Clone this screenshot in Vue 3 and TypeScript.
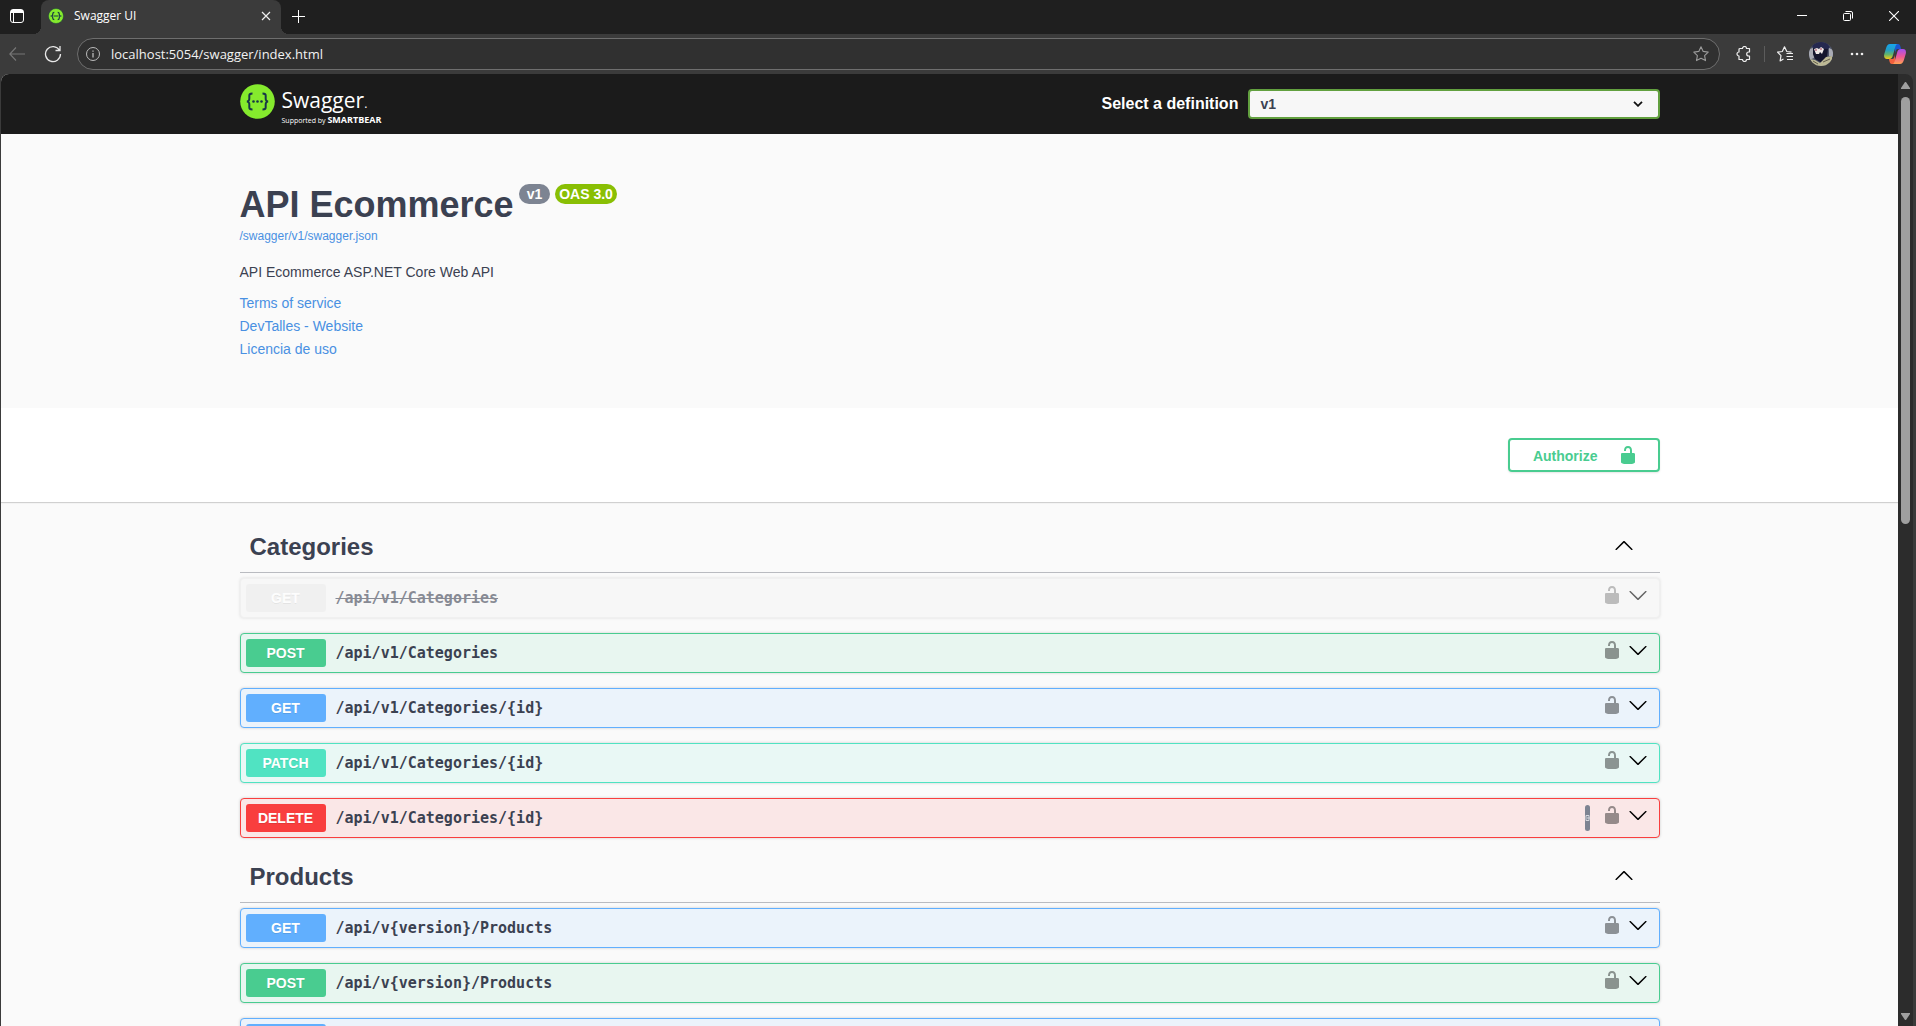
<script setup lang="ts">
import { ref } from 'vue'

type Method = 'get' | 'post' | 'patch' | 'delete'

interface Operation {
  method: Method
  path: string
  deprecated?: boolean
  copy?: boolean
}

interface Tag {
  name: string
  operations: Operation[]
}

const address = ref('localhost:5054/swagger/index.html')
const definition = ref('v1')

const infoLinks: string[] = ['Terms of service', 'DevTalles - Website', 'Licencia de uso']

const tags: Tag[] = [
  {
    name: 'Categories',
    operations: [
      { method: 'get', path: '/api/v1/Categories', deprecated: true },
      { method: 'post', path: '/api/v1/Categories' },
      { method: 'get', path: '/api/v1/Categories/{id}' },
      { method: 'patch', path: '/api/v1/Categories/{id}' },
      { method: 'delete', path: '/api/v1/Categories/{id}', copy: true },
    ],
  },
  {
    name: 'Products',
    operations: [
      { method: 'get', path: '/api/v{version}/Products' },
      { method: 'post', path: '/api/v{version}/Products' },
      { method: 'get', path: '/api/v{version}/Products/{id}' },
    ],
  },
]

const unlocked =
  'M15.8 8H14V5.6C14 2.703 12.665 1 10 1 7.334 1 6 2.703 6 5.6V6h2v-.801C8 3.754 8.797 3 10 3c1.203 0 2 .754 2 2.199V8H4c-.553 0-1 .646-1 1.199V17c0 .549.428 1.139.951 1.307l1.197.387C5.672 18.861 6.55 19 7.1 19h5.8c.549 0 1.428-.139 1.951-.307l1.196-.387c.524-.167.953-.757.953-1.306V9.199C17 8.646 16.352 8 15.8 8z'
const arrowUp =
  'M17.418 14.908c.272.268.709.268.979 0s.271-.701 0-.969l-7.908-7.83c-.27-.268-.707-.268-.979 0l-7.908 7.83c-.27.268-.27.701 0 .969.271.268.709.268.979 0L10 7.767l7.418 7.141z'
const arrowDown =
  'M17.418 6.109c.272-.268.709-.268.979 0s.271.701 0 .969l-7.908 7.83c-.27.268-.707.268-.979 0l-7.908-7.83c-.27-.268-.27-.701 0-.969.271-.268.709-.268.979 0L10 13.25l7.418-7.141z'
</script>

<template>
  <div class="window">
    <header class="tabbar">
      <button class="icon-button workspace" aria-label="Tab actions">
        <svg width="16" height="16" viewBox="0 0 16 16" fill="none" stroke="#fff">
          <rect x="1.5" y="1.5" width="13" height="13" rx="2.5" />
          <path d="M2 3.5h12M2 2.5h12M2 4.5h12M4.5 5v9" />
        </svg>
      </button>
      <div class="tab">
        <svg width="16" height="16" viewBox="0 0 16 16">
          <circle cx="8" cy="8" r="7.5" fill="#85ea2d" stroke="#17413c" stroke-width=".5" />
          <path d="M6.300 4.300c-1.300 0-1.500.5-1.500 1.400 0 1.400 0 1.900-1.200 2.300 1.200.4 1.200.9 1.200 2.300 0 .9.2 1.400 1.500 1.400M9.700 4.300c1.300 0 1.500.5 1.500 1.400 0 1.400 0 1.900 1.200 2.300-1.200.4-1.200.9-1.200 2.300 0 .9-.2 1.400-1.500 1.400M5.500 8h5" fill="none" stroke="#173647" stroke-width="1.2" />
        </svg>
        <span class="tab-title">Swagger UI</span>
        <button class="icon-button" aria-label="Close tab">
          <svg width="10" height="10" viewBox="0 0 10 10" stroke="#eee" stroke-width="1.2"><path d="M1 1l8 8M9 1L1 9" /></svg>
        </button>
      </div>
      <button class="icon-button new-tab" aria-label="New tab">
        <svg width="13" height="13" viewBox="0 0 13 13" stroke="#fff"><path d="M6.500 0v13M0 6.500h13" /></svg>
      </button>
      <div class="window-buttons">
        <button class="icon-button" aria-label="Minimize">
          <svg width="10" height="10" viewBox="0 0 10 10" stroke="#fff"><path d="M0 4.500h10" /></svg>
        </button>
        <button class="icon-button" aria-label="Restore">
          <svg width="10" height="10" viewBox="0 0 10 10" stroke="#fff" fill="none"><rect x=".5" y="2.500" width="7" height="7" rx="1" /><path d="M2.500.5H8A1.500 1.500 0 0 1 9.500 2v5.500" /></svg>
        </button>
        <button class="icon-button" aria-label="Close">
          <svg width="10" height="10" viewBox="0 0 10 10" stroke="#fff" stroke-width="1.100"><path d="M0 0l10 10M10 0L0 10" /></svg>
        </button>
      </div>
    </header>

    <div class="toolbar">
      <button class="icon-button back" aria-label="Back">
        <svg width="16" height="14" viewBox="0 0 16 14" fill="none" stroke="#777" stroke-width="1.100"><path d="M7 .5L.8 7 7 13.500M1 7h15" /></svg>
      </button>
      <button class="icon-button" aria-label="Refresh">
        <svg width="18" height="18" viewBox="0 0 18 18" fill="none" stroke="#e8e8e8" stroke-width="1.300"><path d="M15.500 5.300A7.500 7.500 0 1 0 16.500 9M16 1v4.500h-4.500" /></svg>
      </button>
      <div class="address">
        <svg width="14" height="14" viewBox="0 0 14 14" fill="none" stroke="#bbb"><circle cx="7" cy="7" r="6.500" /><path d="M7 6v4.500M7 3.500v1.200" stroke-width="1.300" /></svg>
        <input v-model="address" aria-label="Address" />
        <button class="icon-button" aria-label="Add to favorites">
          <svg width="16" height="16" viewBox="0 0 16 16" fill="none" stroke="#9a9a9a" stroke-width="1.100" stroke-linejoin="round"><path d="M8 .8l2.200 4.600 5 .7-3.600 3.500.9 5L8 12.200l-4.500 2.400.9-5L.8 6.100l5-.7z" /></svg>
        </button>
      </div>
      <div class="tools">
        <button class="icon-button" aria-label="Extensions">
          <svg width="16" height="16" viewBox="0 0 16 16" fill="none" stroke="#eee" stroke-width="1.200" stroke-linejoin="round"><path d="M4 2.500h2.500a2 2 0 0 1 4 0H13.500V6h-.8a2 2 0 0 0 0 4h.8v3.500h-3a2 2 0 0 1-4 0H3V10a2 2 0 0 1 0-4V3.500a1 1 0 0 1 1-1z" /></svg>
        </button>
        <span class="divider"></span>
        <button class="icon-button" aria-label="Favorites">
          <svg width="16" height="16" viewBox="0 0 16 16" fill="none" stroke="#eee" stroke-width="1.200" stroke-linejoin="round"><path d="M14.500 6.200l-4.700-.7L7.500.8 5.300 5.500.5 6.200 4 9.700l-.9 5.300L6.500 13M9.500 7.500H16M9.500 10.500H16M10 13.500h6" /></svg>
        </button>
        <button class="icon-button profile" aria-label="Profile">
          <svg width="24" height="24" viewBox="0 0 24 24">
            <defs><clipPath id="face"><circle cx="12" cy="12" r="12" /></clipPath></defs>
            <g clip-path="url(#face)">
              <path fill="#4d5368" d="M0 0h24v24H0z" />
              <path fill="#a9abb4" d="M0 7l4-1 1 10-5 2zM20 6l4 2v7l-4-1z" />
              <path fill="#25284f" d="M5 0h12l4 5-3 3H6L3 4z" />
              <path fill="#15162d" d="M4 6l15 1-1 9-5 5-7-4-2-5z" />
              <path fill="#efe9e8" d="M5 7l2 5h3l1-2 2 2 2-5-3-2-2 2-2-1z" />
              <path stroke="#a23a54" d="M6 8h2M11 7h2" />
              <path fill="#bdb995" d="M1 17l5 1 5 3 6-6 6-1v7l-6 4H5z" />
              <path stroke="#65604d" d="M14 20l7-3M4 19l5 3" />
            </g>
          </svg>
        </button>
        <button class="icon-button" aria-label="Settings and more">
          <svg width="14" height="4" viewBox="0 0 14 4" fill="#eee"><circle cx="2" cy="2" r="1.300" /><circle cx="7" cy="2" r="1.300" /><circle cx="12" cy="2" r="1.300" /></svg>
        </button>
        <button class="icon-button copilot" aria-label="Copilot">
          <svg width="22" height="20" viewBox="0 0 22 20">
            <defs>
              <linearGradient id="cool" x1="0" y1="0" x2="0" y2="1"><stop offset="0" stop-color="#16a5ee" /><stop offset=".4" stop-color="#239fc5" /><stop offset=".7" stop-color="#64b569" /><stop offset="1" stop-color="#f4cb16" /></linearGradient>
              <linearGradient id="warm" x1="0" y1="0" x2="0" y2="1"><stop offset="0" stop-color="#a34ff0" /><stop offset=".5" stop-color="#ee5798" /><stop offset="1" stop-color="#ffa252" /></linearGradient>
            </defs>
            <path fill="#1b55d0" d="M11 0h3c2 0 2.500 2 3 5h-3c-2 0-2 1-3 4z" />
            <path fill="#f2603d" d="M5 15h3c2 0 2-1 3-4v9H8c-2 0-2.500-2-3-5z" />
            <path fill="url(#cool)" d="M6 0h8c-2 0-2.500 2-3 4l-2 7c-.7 2.500-1.500 4-4 4H3c-2.500 0-3.500-2-2.700-5l1.800-6C3 1.500 4 0 6 0z" />
            <path fill="url(#warm)" d="M16 20H8c2 0 2.500-2 3-4l2-7c.7-2.500 1.500-4 4-4h2c2.500 0 3.500 2 2.700 5l-1.800 6c-.9 2.500-1.900 4-3.900 4z" />
          </svg>
        </button>
      </div>
    </div>

    <div class="viewport">
      <main class="page">
        <div class="topbar">
          <div class="wrapper topbar-row">
            <a class="logo" href="#">
              <svg width="35" height="35" viewBox="0 0 35 35">
                <circle cx="17.500" cy="17.500" r="17.300" fill="#85ea2d" />
                <g fill="none" stroke="#173647" stroke-width="2"><path d="M12.500 9.500c-3 0-3.300 1-3.200 3 .1 3 .2 4.500-2.300 5 2.500.5 2.400 2 2.300 5-.1 2 .2 3 3.200 3M22.500 9.500c3 0 3.300 1 3.200 3-.1 3-.2 4.500 2.300 5-2.500.5-2.400 2-2.300 5 .1 2-.2 3-3.200 3" /></g>
                <g fill="#173647"><circle cx="13.500" cy="17.500" r="1.300" /><circle cx="17.500" cy="17.500" r="1.300" /><circle cx="21.500" cy="17.500" r="1.300" /></g>
              </svg>
              <span class="logo-text">
                <span class="logo-name">Swagger<small>.</small></span>
                <span class="logo-sub">Supported by <b>SMARTBEAR</b></span>
              </span>
            </a>
            <div class="definition">
              <label for="definition">Select a definition</label>
              <span class="select-box">
                <select id="definition" v-model="definition"><option>v1</option></select>
                <svg width="10" height="6" viewBox="0 0 10 6" fill="none" stroke="#111" stroke-width="1.800"><path d="M1 .8l4 4 4-4" /></svg>
              </span>
            </div>
          </div>
        </div>

        <section class="wrapper info">
          <div class="title-row">
            <h1>API Ecommerce</h1>
            <span class="pill">v1</span>
            <span class="pill oas">OAS 3.0</span>
          </div>
          <a class="spec" href="#">/swagger/v1/swagger.json</a>
          <p>API Ecommerce ASP.NET Core Web API</p>
          <a v-for="link in infoLinks" :key="link" class="info-link" href="#">{{ link }}</a>
        </section>

        <section class="scheme">
          <div class="wrapper scheme-row">
            <button class="authorize">
              <span>Authorize</span>
              <svg width="20" height="20" viewBox="0 0 20 20" fill="#49cc90"><path :d="unlocked" /></svg>
            </button>
          </div>
        </section>

        <div class="wrapper tags">
          <section v-for="tag in tags" :key="tag.name">
            <div class="tag-head">
              <h2>{{ tag.name }}</h2>
              <button class="icon-button" :aria-label="`Collapse ${tag.name}`">
                <svg width="20" height="20" viewBox="0 0 20 20"><path :d="arrowUp" /></svg>
              </button>
            </div>
            <div
              v-for="op in tag.operations"
              :key="op.method + op.path"
              class="op"
              :class="[op.method, { deprecated: op.deprecated }]"
            >
              <button class="op-main">
                <span class="method">{{ op.method.toUpperCase() }}</span>
                <span class="path">{{ op.path }}</span>
              </button>
              <button v-if="op.copy" class="copy" aria-label="Copy to clipboard">
                <svg width="5" height="6" viewBox="0 0 5 6" fill="none" stroke="#d5d8de"><path d="M1 .5h3v5H1zM2 3h3" /></svg>
              </button>
              <div class="op-actions">
                <button class="icon-button lock" aria-label="Authorization">
                  <svg width="20" height="20" viewBox="0 0 20 20"><path :d="unlocked" /></svg>
                </button>
                <button class="icon-button" aria-label="Expand operation">
                  <svg width="20" height="20" viewBox="0 0 20 20"><path :d="arrowDown" /></svg>
                </button>
              </div>
            </div>
          </section>
        </div>
      </main>
      <div class="scrollbar">
        <svg width="9" height="7" viewBox="0 0 9 7" fill="#9f9f9f"><path d="M3.500.7a1.200 1.200 0 0 1 2 0L9 6v1H0V6z" /></svg>
        <div class="track"><div class="thumb"></div></div>
        <svg width="9" height="7" viewBox="0 0 9 7" fill="#9f9f9f"><path d="M3.500 6.300a1.200 1.200 0 0 0 2 0L9 1V0H0v1z" /></svg>
      </div>
    </div>
  </div>
</template>

<style>
body {
  margin: 0;
  overflow: hidden;
}
</style>

<style scoped>
* {
  box-sizing: border-box;
}
.window {
  display: flex;
  flex-direction: column;
  height: 100vh;
  background: #3b3b3b;
  color: #3b4151;
  font: 14px "Liberation Sans", Arial, sans-serif;
}
button {
  margin: 0;
  padding: 0;
  border: 0;
  background: none;
  color: inherit;
  font: inherit;
  cursor: pointer;
}
svg {
  display: block;
  flex: none;
}
a {
  color: #4990e2;
  text-decoration: none;
}
.icon-button {
  display: flex;
  align-items: center;
  justify-content: center;
}

.tabbar {
  display: flex;
  align-items: center;
  height: 34px;
  padding-bottom: 2px;
  background: #1f1f1f;
  font-family: "Open Sans", "Noto Sans", sans-serif;
}
.workspace {
  width: 33px;
  margin-right: 8px;
}
.tab {
  position: relative;
  display: flex;
  align-items: center;
  align-self: flex-start;
  width: 240px;
  height: 34px;
  padding: 0 10px 2px 7px;
  border-radius: 8px 8px 0 0;
  background: #3b3b3b;
  color: #fff;
  font-size: 12px;
}
.tab::before,
.tab::after {
  content: "";
  position: absolute;
  bottom: 0;
  width: 8px;
  height: 8px;
}
.tab::before {
  left: -8px;
  background: radial-gradient(circle at 0 0, transparent 8px, #3b3b3b 8px);
}
.tab::after {
  right: -8px;
  background: radial-gradient(circle at 100% 0, transparent 8px, #3b3b3b 8px);
}
.tab-title {
  flex: 1;
  margin-left: 10px;
  line-height: 16px;
}
.new-tab {
  margin-left: 11px;
}
.window-buttons {
  display: flex;
  gap: 36px;
  margin-left: auto;
  padding-right: 17px;
}

.toolbar {
  display: flex;
  align-items: center;
  height: 40px;
}
.back {
  margin: 0 19px 0 9px;
}
.address {
  display: flex;
  flex: 1;
  align-items: center;
  height: 32px;
  margin-left: 15px;
  padding: 0 10px 0 8px;
  border: 1px solid #6e6e6e;
  border-radius: 16px;
  background: #303030;
}
.address input {
  flex: 1;
  min-width: 0;
  padding: 0 11px;
  border: 0;
  outline: 0;
  background: none;
  color: #f2f2f2;
  font: 13px "Open Sans", "Noto Sans", sans-serif;
}
.tools {
  display: flex;
  align-items: center;
  padding: 0 10px 0 16px;
}
.divider {
  width: 1px;
  height: 16px;
  margin: 0 12px;
  background: #5c5c5c;
}
.profile {
  margin: 0 17px 0 16px;
}
.copilot {
  margin-left: 20px;
}

.viewport {
  display: flex;
  flex: 1;
  min-height: 0;
  margin: 0 3px 0 1px;
  overflow: hidden;
  border-radius: 8px 8px 0 0;
  background: #2c2c2c;
}
.page {
  flex: 1;
  min-width: 0;
  overflow: hidden;
  background: #fafafa;
}
.scrollbar {
  display: flex;
  flex-direction: column;
  align-items: center;
  width: 15px;
  padding: 8px 0 6px;
}
.track {
  flex: 1;
  width: 9px;
  margin: 8px 0;
}
.thumb {
  height: 47%;
  border-radius: 5px;
  background: #9f9f9f;
}
.wrapper {
  max-width: 1460px;
  margin: 0 auto;
  padding: 0 20px;
}

.topbar {
  background: #1b1b1b;
}
.topbar-row {
  display: flex;
  align-items: center;
  justify-content: space-between;
  height: 60px;
}
.logo {
  display: flex;
  gap: 7px;
  height: 40px;
  color: #fff;
  font-family: "Open Sans", "Noto Sans", sans-serif;
}
.logo-text {
  display: flex;
  flex-direction: column;
}
.logo-name {
  font-size: 21px;
  line-height: 32px;
}
.logo-name small {
  font-size: 12px;
  line-height: 12px;
}
.logo-sub {
  font-size: 7px;
  line-height: 8px;
}
.logo-sub b {
  font-size: 9px;
  line-height: 8px;
}
.definition {
  display: flex;
  flex: none;
  align-items: center;
  gap: 10px;
  width: 558px;
}
.definition label {
  color: #fff;
  font-size: 16px;
  font-weight: 700;
  white-space: nowrap;
}
.select-box {
  display: grid;
  flex: 1;
  align-items: center;
}
.select-box > * {
  grid-area: 1 / 1;
}
.select-box svg {
  justify-self: end;
  margin-right: 17px;
  pointer-events: none;
}
select {
  width: 100%;
  height: 30px;
  padding: 0 10px;
  appearance: none;
  border: 2px solid #62a03f;
  border-radius: 4px;
  background: #f7f7f7;
  color: #3b4151;
  font: 700 14px "Liberation Sans", Arial, sans-serif;
}

.info {
  display: flex;
  flex-direction: column;
  align-items: flex-start;
  padding-top: 50px;
  padding-bottom: 47px;
}
.title-row {
  display: flex;
  align-items: flex-start;
  gap: 5px;
}
h1,
h2,
p {
  margin: 0;
}
h1 {
  font-size: 36px;
  line-height: 41px;
}
.pill {
  padding: 0 8px;
  border-radius: 10px;
  background: #7d8492;
  color: #fff;
  font-weight: 700;
  line-height: 20px;
}
.oas {
  padding: 0 4px;
  background: #89bf04;
}
.spec {
  font-size: 12px;
  line-height: 22px;
}
.info p {
  margin: 15px 0 10px;
  line-height: 20px;
}
.info-link {
  line-height: 23px;
}

.scheme {
  padding: 30px 0;
  background: #fff;
  box-shadow: 0 1px 1px rgba(0, 0, 0, 0.17);
}
.scheme-row {
  display: flex;
  justify-content: flex-end;
}
.authorize {
  display: flex;
  align-items: center;
  gap: 20px;
  height: 34px;
  padding: 0 20px 0 23px;
  border: 2px solid #49cc90;
  border-radius: 4px;
  box-shadow: 0 1px 2px rgba(0, 0, 0, 0.1);
  color: #49cc90;
  font-weight: 700;
}
.authorize span {
  padding-top: 2px;
}

.tags {
  padding-top: 21px;
}
.tag-head {
  display: flex;
  align-items: center;
  justify-content: space-between;
  height: 50px;
  margin-bottom: 5px;
  padding: 0 26px 2px 10px;
  border-bottom: 1px solid #b9bbc0;
}
.tag-head .icon-button {
  padding-bottom: 3px;
}
h2 {
  font-size: 24px;
  line-height: 28px;
}
.op {
  display: flex;
  align-items: center;
  height: 40px;
  margin-bottom: 15px;
  padding: 0 11px 0 5px;
  border: 1px solid var(--tone);
  border-radius: 4px;
  background: var(--tint);
  box-shadow: 0 0 3px rgba(0, 0, 0, 0.19);
}
.get {
  --tone: #61affe;
  --tint: #ebf3fb;
}
.post {
  --tone: #49cc90;
  --tint: #e8f6f0;
}
.patch {
  --tone: #50e3c2;
  --tint: #e9f8f5;
}
.delete {
  --tone: #f93e3e;
  --tint: #fae7e7;
}
.deprecated {
  --tone: #ebebeb;
  --tint: #f6f6f6;
  opacity: 0.6;
}
.op-main {
  display: flex;
  flex: 1;
  align-items: center;
  gap: 10px;
  text-align: left;
}
.method {
  width: 80px;
  border-radius: 3px;
  background: var(--tone);
  color: #fff;
  font-weight: 700;
  line-height: 28px;
  text-align: center;
  text-shadow: 0 1px 0 rgba(0, 0, 0, 0.1);
}
.path {
  font: 700 15px "DejaVu Sans Mono", monospace;
}
.deprecated .path {
  text-decoration: line-through;
}
.copy {
  width: 5px;
  height: 26px;
  margin-right: 12px;
  border-radius: 3px;
  background: #7d8492;
}
.op-actions {
  display: flex;
  gap: 6px;
  padding-bottom: 6px;
}
.lock {
  opacity: 0.4;
}
</style>
